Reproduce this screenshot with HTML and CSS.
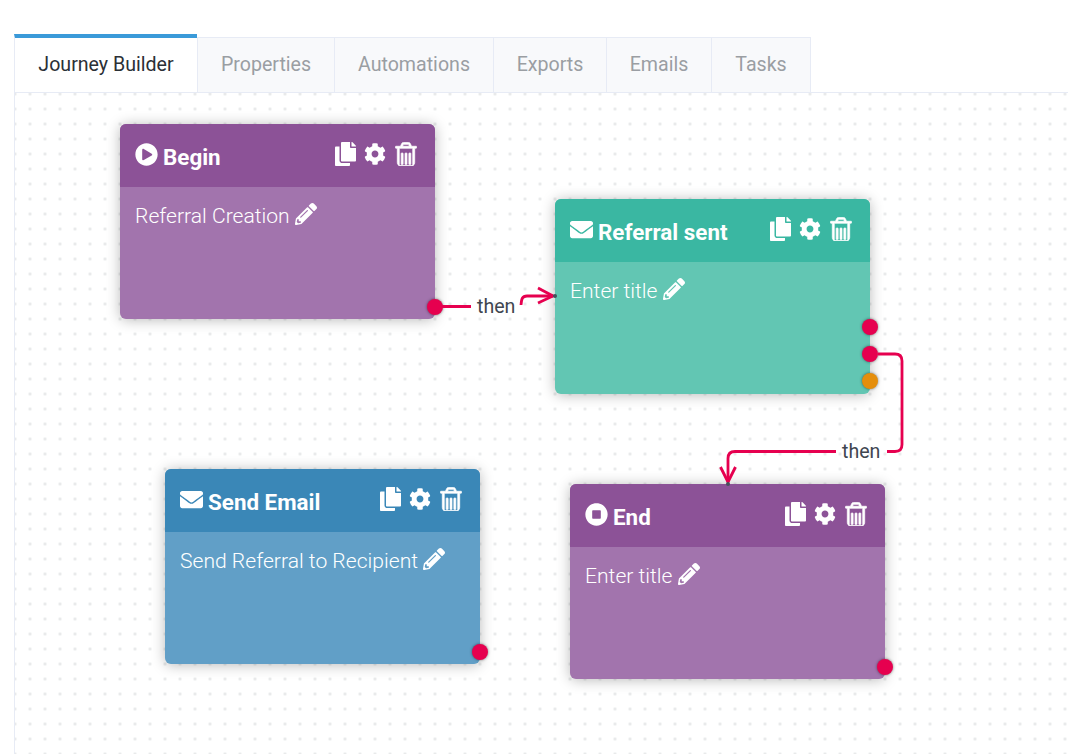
FILE: index.html
```html
<!DOCTYPE html>
<html lang="en">
<head>
<meta charset="utf-8">
<title>Journey Builder</title>
<link rel="stylesheet" href="styles.css">
</head>
<body>
<svg class="sprite" xmlns="http://www.w3.org/2000/svg">
  <symbol id="i-copy" viewBox="0 0 448 512"><path d="M320 448v40c0 13.255-10.745 24-24 24H24c-13.255 0-24-10.745-24-24V120c0-13.255 10.745-24 24-24h72v296c0 30.879 25.121 56 56 56h168zm0-344V0H152c-13.255 0-24 10.745-24 24v368c0 13.255 10.745 24 24 24h272c13.255 0 24-10.745 24-24V128H344c-13.2 0-24-10.800-24-24zm120.971-31.029L375.029 7.029A24 24 0 0 0 358.059 0H352v96h96v-6.059a24 24 0 0 0-7.029-16.970z"/></symbol>
  <symbol id="i-cog" viewBox="0 0 512 512"><path d="M487.400 315.700l-42.600-24.600c4.300-23.200 4.300-47 0-70.200l42.600-24.600c4.900-2.800 7.100-8.600 5.500-14-11.100-35.600-30-67.800-54.700-94.600-3.800-4.100-10-5.100-14.800-2.300L380.800 110c-17.900-15.400-38.500-27.300-60.800-35.100V25.800c0-5.600-3.900-10.500-9.400-11.700-36.700-8.200-74.300-7.800-109.200 0-5.500 1.200-9.400 6.100-9.400 11.700V75c-22.200 7.900-42.800 19.800-60.800 35.100L88.700 85.500c-4.900-2.800-11-1.900-14.800 2.300-24.700 26.700-43.600 58.900-54.700 94.600-1.700 5.400.6 11.200 5.500 14L67.300 221c-4.300 23.200-4.300 47 0 70.200l-42.600 24.600c-4.900 2.800-7.100 8.600-5.500 14 11.100 35.600 30 67.800 54.700 94.600 3.800 4.100 10 5.100 14.800 2.300l42.600-24.600c17.900 15.400 38.500 27.300 60.800 35.100v49.200c0 5.600 3.900 10.500 9.400 11.700 36.700 8.200 74.300 7.800 109.200 0 5.500-1.200 9.400-6.100 9.400-11.700v-49.200c22.200-7.900 42.800-19.800 60.800-35.100l42.600 24.600c4.900 2.800 11 1.900 14.800-2.300 24.700-26.700 43.600-58.900 54.700-94.600 1.500-5.500-.7-11.300-5.600-14.100zM256 336c-44.100 0-80-35.900-80-80s35.900-80 80-80 80 35.900 80 80-35.900 80-80 80z"/></symbol>
  <symbol id="i-trash" viewBox="-25 -217 1458 1586"><path class="trash-shape" d="M512 1248v-704q0-14-9-23t-23-9h-64q-14 0-23 9t-9 23v704q0 14 9 23t23 9h64q14 0 23-9t9-23zm256 0v-704q0-14-9-23t-23-9h-64q-14 0-23 9t-9 23v704q0 14 9 23t23 9h64q14 0 23-9t9-23zm256 0v-704q0-14-9-23t-23-9h-64q-14 0-23 9t-9 23v704q0 14 9 23t23 9h64q14 0 23-9t9-23zm128 128v-1184h-896v1184q0 22 7 40.500t14.500 27 10.500 8.500h832q3 0 10.500-8.500t14.500-27 7-40.500zm-672-1312h448l-48-117q-7-9-17-11h-317q-10 2-17 11zm928 32v64q0 14-9 23t-23 9h-96v948q0 83-47 143.500t-113 60.500h-832q-66 0-113-58.500t-47-141.500v-952h-96q-14 0-23-9t-9-23v-64q0-14 9-23t23-9h309l70-167q15-37 54-63t79-26h320q40 0 79 26t54 63l70 167h309q14 0 23 9t9 23z"/></symbol>
  <symbol id="i-play" viewBox="0 0 512 512"><path d="M256 8C119 8 8 119 8 256s111 248 248 248 248-111 248-248S393 8 256 8zm115.700 272l-176 101c-15.800 8.800-35.700-2.500-35.700-21V152c0-18.400 19.800-29.800 35.700-21l176 107c16.400 9.200 16.400 32.900 0 42z"/></symbol>
  <symbol id="i-stop" viewBox="0 0 512 512"><path d="M256 8C119 8 8 119 8 256s111 248 248 248 248-111 248-248S393 8 256 8zm96 328c0 8.800-7.200 16-16 16H176c-8.800 0-16-7.200-16-16V176c0-8.800 7.200-16 16-16h160c8.800 0 16 7.200 16 16v160z"/></symbol>
  <symbol id="i-mail" viewBox="0 0 512 512"><path d="M502.300 190.800c3.900-3.100 9.700-.2 9.700 4.700V400c0 26.500-21.500 48-48 48H48c-26.500 0-48-21.500-48-48V195.600c0-5 5.700-7.800 9.700-4.700 22.400 17.400 52.100 39.500 154.100 113.600 21.100 15.400 56.700 47.800 92.200 47.600 35.700.3 72-32.800 92.300-47.600 102-74.100 131.600-96.300 154-113.700zM256 320c23.200.4 56.600-29.200 73.400-41.400 132.700-96.300 142.800-104.700 173.400-128.700 5.800-4.500 9.200-11.500 9.200-18.900v-19c0-26.500-21.500-48-48-48H48C21.500 64 0 85.500 0 112v19c0 7.400 3.400 14.300 9.200 18.900 30.600 23.900 40.700 32.400 173.400 128.700 16.800 12.200 50.200 41.800 73.400 41.400z"/></symbol>
  <symbol id="i-pencil" viewBox="0 0 512 512"><path d="M497.900 142.100l-46.100 46.100c-4.700 4.700-12.300 4.700-17 0l-111-111c-4.700-4.700-4.700-12.300 0-17l46.100-46.100c18.700-18.700 49.100-18.700 67.900 0l60.100 60.100c18.800 18.700 18.800 49.100 0 67.900zM284.200 99.800L21.600 362.400.4 483.900c-2.900 16.400 11.400 30.600 27.800 27.800l121.500-21.300 262.600-262.600c4.700-4.700 4.700-12.300 0-17l-111-111c-4.800-4.700-12.400-4.700-17.100 0zM124.100 339.900c-5.500-5.500-5.500-14.300 0-19.800l154-154c5.500-5.500 14.300-5.500 19.800 0s5.500 14.300 0 19.800l-154 154c-5.500 5.500-14.300 5.500-19.800 0zM88 424h48v36.300l-64.500 11.300-31.100-31.100L51.700 376H88v48z"/></symbol>
</svg>

<div class="page">
  <nav class="tabs">
    <a class="tab tab-active">Journey Builder</a>
    <a class="tab">Properties</a>
    <a class="tab">Automations</a>
    <a class="tab">Exports</a>
    <a class="tab">Emails</a>
    <a class="tab">Tasks</a>
  </nav>

  <main class="canvas">
    <svg class="edges" xmlns="http://www.w3.org/2000/svg">
      <path class="edge" d="M420 213.500H456"/>
      <path class="edge" d="M506 212C506.500 206 507 203 512 203H538"/>
      <path class="edge" d="M523 195L538 203L523 210"/>
      <path class="edge" d="M863 261H880Q887 261 887 268V351.500Q887 358.500 880 358.500H872"/>
      <path class="edge" d="M821 358.500H720Q713 358.500 713 365.500V389"/>
      <path class="edge" d="M705.500 374L713 389L720.500 374"/>
      <circle class="anchor" cx="540" cy="203" r="2"/>
      <circle class="anchor" cx="713" cy="391" r="2"/>
    </svg>

    <span class="edge-label edge-label-a">then</span>
    <span class="edge-label edge-label-b">then</span>

    <article class="node node-purple node-begin">
      <header class="node-head">
        <svg class="ico ico-lead"><use href="#i-play"/></svg>
        <h2 class="node-title">Begin</h2>
        <div class="node-actions">
          <svg class="ico ico-copy"><use href="#i-copy"/></svg>
          <svg class="ico ico-cog"><use href="#i-cog"/></svg>
          <svg class="ico ico-trash"><use href="#i-trash"/></svg>
        </div>
      </header>
      <div class="node-body">Referral Creation <svg class="ico ico-pencil"><use href="#i-pencil"/></svg></div>
      <span class="port port-low"></span>
    </article>

    <article class="node node-teal node-sent">
      <header class="node-head">
        <svg class="ico ico-mail"><use href="#i-mail"/></svg>
        <h2 class="node-title">Referral sent</h2>
        <div class="node-actions">
          <svg class="ico ico-copy"><use href="#i-copy"/></svg>
          <svg class="ico ico-cog"><use href="#i-cog"/></svg>
          <svg class="ico ico-trash"><use href="#i-trash"/></svg>
        </div>
      </header>
      <div class="node-body">Enter title <svg class="ico ico-pencil"><use href="#i-pencil"/></svg></div>
      <span class="port port-1"></span>
      <span class="port port-2"></span>
      <span class="port port-3"></span>
    </article>

    <article class="node node-blue node-email">
      <header class="node-head">
        <svg class="ico ico-mail"><use href="#i-mail"/></svg>
        <h2 class="node-title">Send Email</h2>
        <div class="node-actions">
          <svg class="ico ico-copy"><use href="#i-copy"/></svg>
          <svg class="ico ico-cog"><use href="#i-cog"/></svg>
          <svg class="ico ico-trash"><use href="#i-trash"/></svg>
        </div>
      </header>
      <div class="node-body">Send Referral to Recipient <svg class="ico ico-pencil"><use href="#i-pencil"/></svg></div>
      <span class="port port-low"></span>
    </article>

    <article class="node node-purple node-end">
      <header class="node-head">
        <svg class="ico ico-lead"><use href="#i-stop"/></svg>
        <h2 class="node-title">End</h2>
        <div class="node-actions">
          <svg class="ico ico-copy"><use href="#i-copy"/></svg>
          <svg class="ico ico-cog"><use href="#i-cog"/></svg>
          <svg class="ico ico-trash"><use href="#i-trash"/></svg>
        </div>
      </header>
      <div class="node-body">Enter title <svg class="ico ico-pencil"><use href="#i-pencil"/></svg></div>
      <span class="port port-low"></span>
    </article>
  </main>
</div>
</body>
</html>
```

FILE: styles.css
```css
* { box-sizing: border-box; }

html, body {
  margin: 0;
  height: 100%;
  overflow: hidden;
  background: #fff;
}

body {
  font-family: Roboto, "Liberation Sans", sans-serif;
  color: #3f4650;
}

.sprite {
  position: absolute;
  width: 0;
  height: 0;
}

.page {
  height: 100%;
  padding: 34px 0 0 14px;
  display: flex;
  flex-direction: column;
}

.tabs {
  display: flex;
  align-items: flex-end;
  flex: none;
  height: 58px;
}

.tab {
  height: 55px;
  padding: 0 0 2px;
  display: flex;
  align-items: center;
  justify-content: center;
  font-size: 19.6px;
  color: #9a9ea3;
  background: #f8f9fb;
  border-top: 1px solid #e7ebf5;
  border-left: 1px solid #e7ebf5;
}

.tab:nth-child(1) { width: 183px; }
.tab:nth-child(2) { width: 137px; }
.tab:nth-child(3) { width: 159px; }
.tab:nth-child(4) { width: 113px; }
.tab:nth-child(5) { width: 105px; }
.tab:nth-child(6) { width: 100px; border-right: 1px solid #e7ebf5; }

.tab-active {
  height: 58px;
  color: #2b3036;
  background: #fff;
  border-top: 4px solid #3a9ad9;
}

.canvas {
  position: relative;
  flex: 1;
  border-top: 1px solid #e7ebf5;
  border-left: 1px solid #e7ebf5;
  background-color: #fff;
  background-image: radial-gradient(circle, #e6e7e9 1px, transparent 2px);
  background-size: 15px 15px;
  background-position: -7.5px -6.5px;
}

.edges {
  position: absolute;
  inset: 0;
  width: 100%;
  height: 100%;
  overflow: visible;
  z-index: 3;
}

.edge {
  fill: none;
  stroke: #e6004f;
  stroke-width: 2.8;
}

.anchor { fill: #45505c; }

.edge-label {
  position: absolute;
  z-index: 3;
  font-size: 19.6px;
  line-height: 24px;
  color: #3f4650;
}

.edge-label-a { left: 462px; top: 202px; }
.edge-label-b { left: 827px; top: 347px; }

.node {
  position: absolute;
  z-index: 2;
  width: 315px;
  height: 195px;
  border-radius: 6px;
  box-shadow: 0 1px 14px rgba(0, 0, 0, 0.28);
  color: #fff;
}

.node-begin { left: 105px; top: 31px; }
.node-sent  { left: 540px; top: 106px; }
.node-email { left: 150px; top: 376px; }
.node-end   { left: 555px; top: 391px; }

.node-purple { background: #a274ad; }
.node-purple .node-head { background: #8c5297; }
.node-teal { background: #62c6b3; }
.node-teal .node-head { background: #3ab7a2; }
.node-blue { background: #619fc7; }
.node-blue .node-head { background: #3a87b7; }

.node-head {
  height: 63px;
  padding: 0 19px 0 15px;
  display: flex;
  align-items: center;
  border-radius: 6px 6px 0 0;
}

.node-title {
  margin: 0 0 0 5px;
  font-size: 22.4px;
  font-weight: 700;
  line-height: 1;
  position: relative;
  top: 2px;
}

.node-actions {
  margin-left: auto;
  display: flex;
  align-items: center;
  gap: 8px;
  position: relative;
  top: -2px;
}

.ico {
  display: inline-block;
  fill: currentColor;
  flex: none;
}

.trash-shape {
  stroke: currentColor;
  stroke-width: 50;
}

.ico-lead { width: 23px; height: 23px; position: relative; top: -1px; }
.ico-mail { width: 23px; height: 23px; position: relative; top: -1px; }
.ico-copy { width: 21px; height: 24px; }
.ico-cog { width: 22px; height: 22px; }
.ico-trash { width: 22px; height: 24px; margin: 0 -1px 0 1px; }
.ico-pencil { width: 22px; height: 22px; vertical-align: -2px; }

.node-body {
  padding: 15px 15px 0;
  font-size: 21.1px;
  font-weight: 300;
  line-height: 28px;
}

.port {
  position: absolute;
  right: -8px;
  width: 16px;
  height: 16px;
  border-radius: 50%;
  background: #e6004f;
  box-shadow: 0 0 3px rgba(0, 0, 0, 0.5);
}

.port-low { top: 174.5px; }
.port-1 { top: 120px; }
.port-2 { top: 147px; }
.port-3 { top: 174px; background: #e58e0c; }
```
